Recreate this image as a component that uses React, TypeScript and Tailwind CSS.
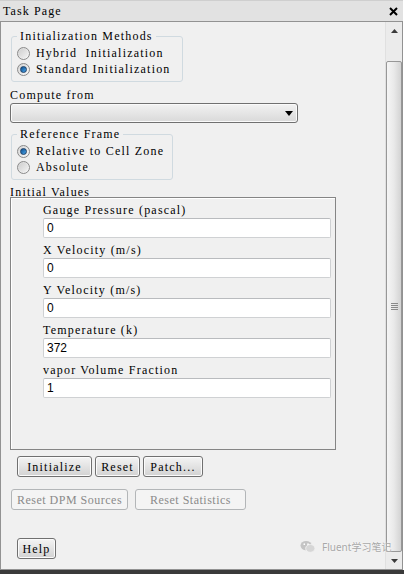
import React from "react";

const Radio = ({ checked }: { checked?: boolean }) => (
  <div className="w-[13px] h-[13px] rounded-full border border-[#8a8a8a] bg-linear-to-br from-[#d4d4d4] to-[#fafafa] flex items-center justify-center shrink-0">
    {checked ? (
      <div className="w-[7px] h-[7px] rounded-full bg-linear-to-br from-[#0b4f8f] to-[#4aa6ea] border border-[#1d3f66]" />
    ) : (
      <div className="w-[9px] h-[9px] rounded-full bg-linear-to-br from-[#cfcfcf] to-[#f2f2f2]" />
    )}
  </div>
);

const RadioRow = ({ label, checked }: { label: string; checked?: boolean }) => (
  <div className="h-[16px] flex items-center gap-[6px]">
    <Radio checked={checked} />
    <span className="whitespace-pre">{label}</span>
  </div>
);

const Btn = ({ label, w, disabled }: { label: string; w: string; disabled?: boolean }) => (
  <div
    className={
      "h-[21px] rounded-[3px] border flex items-center justify-center whitespace-pre " +
      (disabled
        ? "border-[#b3b6b8] bg-[#f4f4f4] text-[#8a8a8a] tracking-[0.5px] "
        : "border-[#707070] bg-linear-to-b from-[#f4f4f4] to-[#d2d2d2] text-black shadow-[inset_0_0_0_1px_#fbfbfb] ") +
      w
    }
  >
    {label}
  </div>
);

const Field = ({ label, value }: { label: string; value: string }) => (
  <div className="mb-[4px]">
    <div className="h-[16px] leading-[16px] whitespace-pre">{label}</div>
    <div className="h-[20px] w-[288px] bg-white border border-[#cfd1d3] border-t-[#b9bbbe] rounded-[2px] flex items-center pl-[3px] font-['Liberation_Sans',sans-serif] text-[12px] tracking-normal">
      {value}
    </div>
  </div>
);

export default function App() {
  return (
    <div className="w-[404px] h-[574px] bg-white relative overflow-hidden font-['Liberation_Serif',serif] text-[12px] tracking-[1.2px] text-black leading-[16px]">
      {/* Title bar */}
      <div className="w-[403px] h-[21px] bg-[#e2e2e2] border-t border-[#cfcfcf] flex items-center justify-between pl-[3px] pr-[5px]">
        <span className="tracking-[1.1px]">Task Page</span>
        <svg width="9" height="9" viewBox="0 0 9 9">
          <path d="M1 1L8 8M8 1L1 8" stroke="#000" strokeWidth="2" />
        </svg>
      </div>

      {/* Frame */}
      <div className="w-[403px] h-[549px] border border-[#929292] bg-[#f0f0f0] flex">
        <div className="flex-1 pl-[9px] flex flex-col items-start">
          <fieldset className="ml-[1px] mt-[6px] w-[172px] border border-[#d0dae0] rounded-[3px] pl-[5px] pb-[4px]">
            <legend className="px-[3px] h-[16px]">Initialization Methods</legend>
            <div className="pt-[1px]">
              <RadioRow label="Hybrid  Initialization" />
              <RadioRow label="Standard Initialization" checked />
            </div>
          </fieldset>

          <div className="mt-[6px] h-[15px] leading-[15px]">Compute from</div>
          <div className="w-[288px] h-[20px] border border-[#707070] rounded-[3px] bg-linear-to-b from-[#f2f2f2] to-[#d9d9d9] flex items-center justify-end pr-[4px] shadow-[inset_0_0_0_1px_#fafafa]">
            <svg width="8" height="5" viewBox="0 0 8 5">
              <path d="M0 0H8L4 5Z" fill="#000" />
            </svg>
          </div>

          <fieldset className="ml-[1px] mt-[3px] w-[162px] border border-[#d0dae0] rounded-[3px] pl-[5px] pb-[4px]">
            <legend className="px-[3px] h-[16px]">Reference Frame</legend>
            <div className="pt-[1px]">
              <RadioRow label="Relative to Cell Zone" checked />
              <RadioRow label="Absolute" />
            </div>
          </fieldset>

          <div className="mt-[4px] h-[13px] leading-[17px]">Initial Values</div>
          <div className="w-[326px] h-[253px] border border-[#858585] shadow-[inset_1px_1px_0_#ffffff] pl-[32px] pt-[4px]">
            <Field label="Gauge Pressure (pascal)" value="0" />
            <Field label="X Velocity (m/s)" value="0" />
            <Field label="Y Velocity (m/s)" value="0" />
            <Field label="Temperature (k)" value="372" />
            <Field label="vapor Volume Fraction" value="1" />
          </div>

          <div className="mt-[6px] ml-[7px] flex gap-[3px]">
            <Btn label="Initialize" w="w-[75px]" />
            <Btn label="Reset" w="w-[45px]" />
            <Btn label="Patch..." w="w-[60px]" />
          </div>

          <div className="mt-[12px] ml-[1px] flex gap-[7px]">
            <Btn label="Reset DPM Sources" w="w-[117px]" disabled />
            <Btn label="Reset Statistics" w="w-[111px]" disabled />
          </div>

          <div className="mt-[28px] ml-[7px]">
            <Btn label="Help" w="w-[39px]" />
          </div>
        </div>

        {/* Scrollbar */}
        <div className="w-[17px] h-full bg-[#ebebeb] border-l border-[#e0e0e0] flex flex-col">
          <div className="h-[17px] flex items-center justify-center">
            <svg width="7" height="4" viewBox="0 0 7 4">
              <path d="M0 4H7L3.5 0Z" fill="#3a3a3a" />
            </svg>
          </div>
          <div className="h-[22px]" />
          <div className="h-[491px] rounded-[2px] border border-[#979797] bg-linear-to-r from-[#f5f5f5] via-[#e9e9e9] to-[#d3d3d3] flex items-center justify-center">
            <div className="flex flex-col gap-[1px]">
              <div className="w-[7px] h-[1px] bg-[#8a8a8a]" />
              <div className="w-[7px] h-[1px] bg-[#8a8a8a]" />
              <div className="w-[7px] h-[1px] bg-[#8a8a8a]" />
              <div className="w-[7px] h-[1px] bg-[#8a8a8a]" />
            </div>
          </div>
          <div className="h-[17px] flex items-center justify-center">
            <svg width="7" height="4" viewBox="0 0 7 4">
              <path d="M0 0H7L3.5 4Z" fill="#3a3a3a" />
            </svg>
          </div>
        </div>
      </div>

      <div className="w-[404px] h-[4px] bg-[#3a3a3a]" />

      {/* Watermark */}
      <div className="absolute left-[300px] top-[540px] flex items-center gap-[6px] whitespace-nowrap font-['Noto_Sans','Noto_Sans_CJK_SC',sans-serif] text-[10px] leading-[14px] tracking-normal text-[#a8a8a8] [text-shadow:0_0_2px_#ffffff]">
        <svg width="16" height="14" viewBox="0 0 17 15">
          <ellipse cx="6.5" cy="6" rx="6" ry="5" fill="#c4c4c4" />
          <ellipse cx="11" cy="9" rx="5" ry="4.2" fill="#d6d6d6" stroke="#f0f0f0" strokeWidth="1" />
          <circle cx="4.5" cy="4.5" r="0.9" fill="#fff" />
          <circle cx="8.5" cy="4.5" r="0.9" fill="#fff" />
        </svg>
        <span>Fluent学习笔记</span>
      </div>
    </div>
  );
}
